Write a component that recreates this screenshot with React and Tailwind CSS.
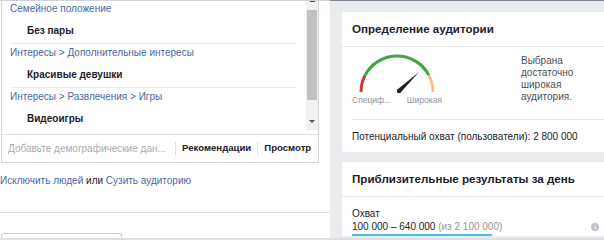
import React from "react";

const Group = ({ path, value, last }) => (
  <div className={last ? "" : "border-b border-[#e9ebee] mr-[1px]"}>
    <div className="h-[18px] leading-[18px] text-[#4b67a1] whitespace-nowrap">{path}</div>
    <div className="mt-[3px] h-[20px] leading-[20px] pl-[17px] font-bold text-[#1d2129] mb-[2px]">{value}</div>
  </div>
);

function Gauge() {
  return (
    <svg width="90" height="40" viewBox="0 0 90 40">
      <path d="M9 38 A36 36 0 0 1 13.2 21.1" fill="none" stroke="#cf3434" strokeWidth="3" />
      <path d="M13.2 21.1 A36 36 0 0 1 76.8 21.1" fill="none" stroke="#42a63d" strokeWidth="3" />
      <path d="M76.8 21.1 A36 36 0 0 1 81 38" fill="none" stroke="#f5c08e" strokeWidth="3" />
      <polygon points="48.6,38.6 45.4,35.4 67,18" fill="#1d2129" />
      <circle cx="47" cy="37" r="2.2" fill="#1d2129" />
    </svg>
  );
}

export default function App() {
  return (
    <div className="w-[604px] h-[240px] overflow-hidden flex flex-col bg-white font-['Liberation_Sans',Arial,sans-serif] text-[10px] text-[#1d2129]">
      <div className="flex h-px">
        <div className="w-[330px] bg-[#cfd2d8]" />
        <div className="flex-1 bg-[#7f8590]" />
      </div>
      <div className="flex h-[237px] overflow-hidden">
        {/* Left column */}
        <div className="w-[330px] bg-white flex flex-col">
          <div className="ml-[1px] w-[318px] border-x border-b border-[#d3d6db]">
            <div className="flex h-[134px] border-b border-[#e0e2e6]">
              <div className="flex-1 overflow-hidden pl-[8px] pr-[9px]">
                <div className="-mt-[1px]">
                  <Group path="Семейное положение" value="Без пары" />
                  <Group path="Интересы > Дополнительные интересы" value="Красивые девушки" />
                  <Group path="Интересы > Развлечения > Игры" value="Видеоигры" last />
                </div>
              </div>
              <div className="w-[12px] h-[129px] bg-[#f1f1f1] flex flex-col items-center">
                <div className="w-[5px] h-px bg-[#505050]" />
                <div className="mt-[8px] w-[10px] h-[90px] bg-[#c1c1c1]" />
                <div className="mt-[20px] w-0 h-0 border-l-[3px] border-r-[3px] border-t-[3px] border-l-transparent border-r-transparent border-t-[#505050]" />
              </div>
            </div>
            <div className="h-[27px] flex items-center pl-[6px] whitespace-nowrap">
              <span className="w-[167px] text-[#a8acb2]">Добавьте демографические дан...</span>
              <span className="w-px h-[13px] bg-[#dddfe2]" />
              <span className="ml-[6px] font-bold text-[9.6px] text-[#1d2129]">Рекомендации</span>
              <span className="ml-[6px] w-px h-[13px] bg-[#dddfe2]" />
              <span className="ml-[6px] font-bold text-[9.6px] text-[#1d2129]">Просмотр</span>
            </div>
          </div>
          <div className="mt-[11px] leading-[14px] whitespace-nowrap">
            <span className="text-[#4b67a1]">Исключить людей</span>
            <span className="text-[#1d2129]"> или </span>
            <span className="text-[#4b67a1]">Сузить аудиторию</span>
          </div>
          <div className="mt-[24px] h-px bg-[#dddfe2]" />
          <div className="mt-[20px] ml-[1px] w-[121px] h-[10px] border border-b-0 border-[#ccd0d5] rounded-t-[3px]" />
        </div>

        {/* Right column */}
        <div className="flex-1 bg-[#e9ebee] overflow-hidden pl-[12px] pt-[11px]">
          <div className="w-[272px] bg-white">
            <div className="h-[35px] px-[10px] flex items-center border-b border-[#e5e6e9] font-bold text-[11.6px] text-[#1d2129] whitespace-nowrap">
              Определение аудитории
            </div>
            <div className="h-[72px] px-[10px] flex">
              <div className="w-[90px] pt-[7px]">
                <Gauge />
                <div className="flex justify-between h-[12px] leading-[12px] text-[8.5px] text-[#90949c] whitespace-nowrap">
                  <span>Специф...</span>
                  <span>Широкая</span>
                </div>
              </div>
              <div className="ml-[79px] pt-[8px] leading-[12px] text-[#4b4f56]">
                Выбрана<br />достаточно<br />широкая<br />аудитория.
              </div>
            </div>
            <div className="mx-[10px] h-px bg-[#e5e6e9]" />
            <div className="h-[32px] px-[10px] flex items-center text-[#1d2129] whitespace-nowrap">
              Потенциальный охват (пользователи): 2 800 000
            </div>
          </div>

          <div className="mt-[10px] w-[272px] bg-white">
            <div className="h-[35px] px-[10px] flex items-center border-b border-[#e5e6e9] font-bold text-[11.6px] text-[#1d2129] whitespace-nowrap">
              Приблизительные результаты за день
            </div>
            <div className="px-[10px] pt-[10px]">
              <div className="leading-[13px] text-[#1d2129]">Охват</div>
              <div className="flex items-center justify-between leading-[13px] pr-[5px] whitespace-nowrap">
                <span>
                  <span className="text-[#1d2129]">100 000 – 640 000</span>{" "}
                  <span className="text-[#90949c]">(из 2 100 000)</span>
                </span>
                <span className="w-[8px] h-[8px] rounded-full bg-[#bec2c9] text-white text-[6px] font-bold leading-[8px] text-center">i</span>
              </div>
              <div className="mt-px h-[2px] w-[140px] bg-[#4cbfe2]" />
            </div>
          </div>
        </div>
      </div>
      <div className="h-[2px] bg-[#dddfe2]" />
    </div>
  );
}
